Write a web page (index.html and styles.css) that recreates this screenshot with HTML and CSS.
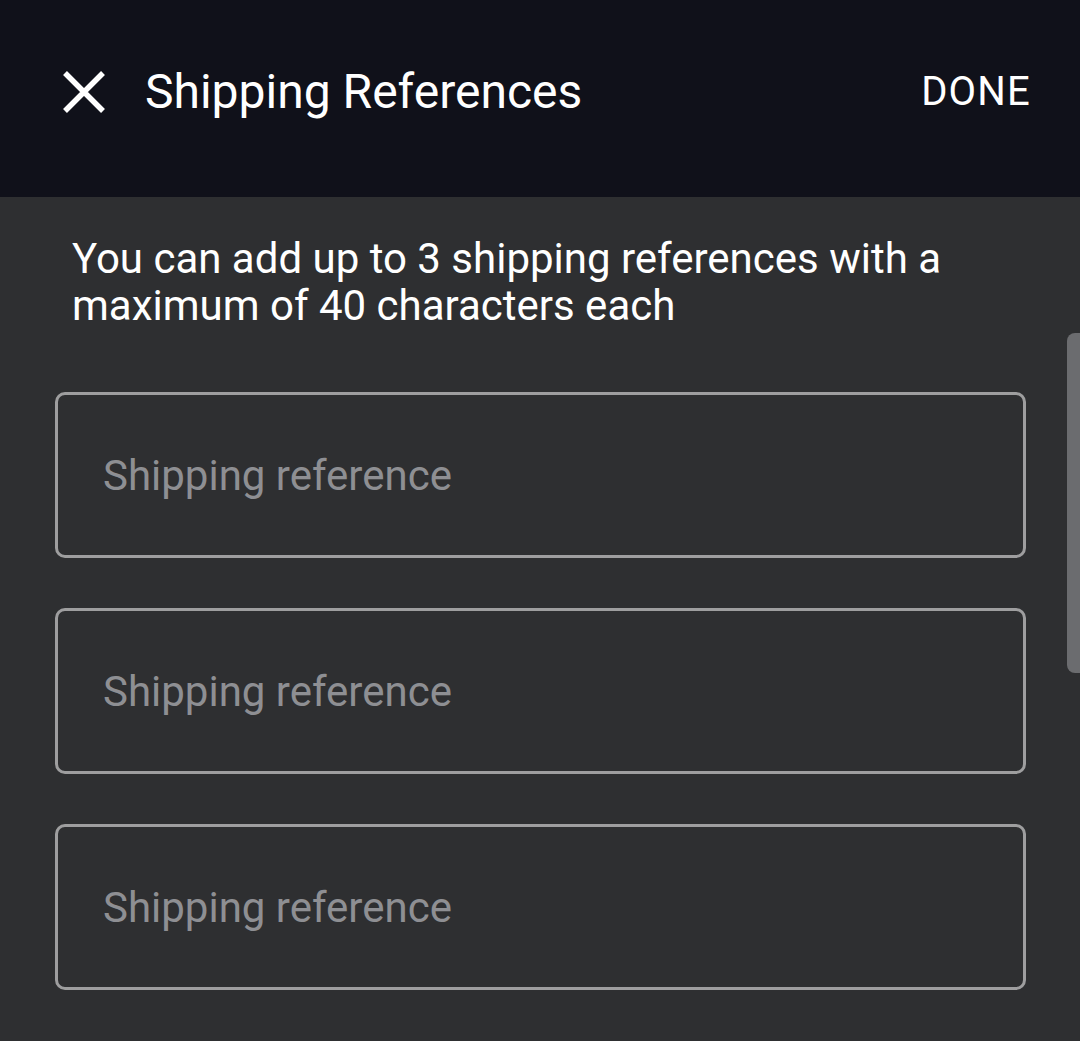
FILE: index.html
```html
<!DOCTYPE html>
<html lang="en">
<head>
  <meta charset="UTF-8" />
  <title>Shipping References</title>
  <link rel="stylesheet" href="styles.css">
</head>
<body>
  <div class="toolbar">
    <button class="close" aria-label="Close">
      <svg width="44" height="44" viewBox="0 0 44 44">
        <path d="M3 3 L41 41 M41 3 L3 41" stroke="#fff" stroke-width="5.5" fill="none" />
      </svg>
    </button>
    <h1>Shipping References</h1>
    <button class="done">DONE</button>
  </div>

  <div class="content">
    <p class="hint">You can add up to 3 shipping references with a maximum of 40 characters each</p>

    <div class="fields">
      <input type="text" placeholder="Shipping reference" />
      <input type="text" placeholder="Shipping reference" />
      <input type="text" placeholder="Shipping reference" />
    </div>

    <div class="scrollbar"></div>
  </div>
</body>
</html>
```

FILE: styles.css
```css
body {
  margin: 0;
  background-color: #2e2f31;
  font-family: Roboto, 'Noto Sans', sans-serif;
  height: 1041px;
  overflow: hidden;
}

.toolbar {
  background-color: #10111a;
  height: 197px;
  display: flex;
  align-items: center;
  padding: 0 49px 0 62px;
  box-sizing: border-box;
}

.toolbar button {
  background: none;
  border: none;
  color: white;
  padding: 0;
  cursor: pointer;
}

.close {
  display: flex;
  margin-top: -14px;
}

.toolbar h1 {
  flex: 1;
  margin: -14px 0 0 39px;
  color: white;
  font-weight: 400;
  font-size: 48px;
}

.done {
  font-family: Roboto, sans-serif;
  font-size: 40px;
  letter-spacing: 1.2px;
  margin-top: -14px;
}

.content {
  position: relative;
  padding: 38px 55px 0 55px;
}

.hint {
  color: white;
  font-size: 42px;
  line-height: 47px;
  margin: 0 0 63px 17px;
  padding-right: 60px;
}

.fields {
  display: flex;
  flex-direction: column;
  gap: 50px;
}

.fields input {
  width: 971px;
  height: 166px;
  box-sizing: border-box;
  background: transparent;
  border: 3px solid #9e9e9f;
  border-radius: 10px;
  padding: 0 45px;
  font-family: Roboto, sans-serif;
  font-size: 42px;
  color: white;
  outline: none;
}

.fields input::placeholder {
  color: #8e8f93;
}

.scrollbar {
  position: absolute;
  right: 0;
  top: 136px;
  width: 13px;
  height: 340px;
  background-color: #6b6c6f;
  border-radius: 8px 0 0 8px;
}
```
